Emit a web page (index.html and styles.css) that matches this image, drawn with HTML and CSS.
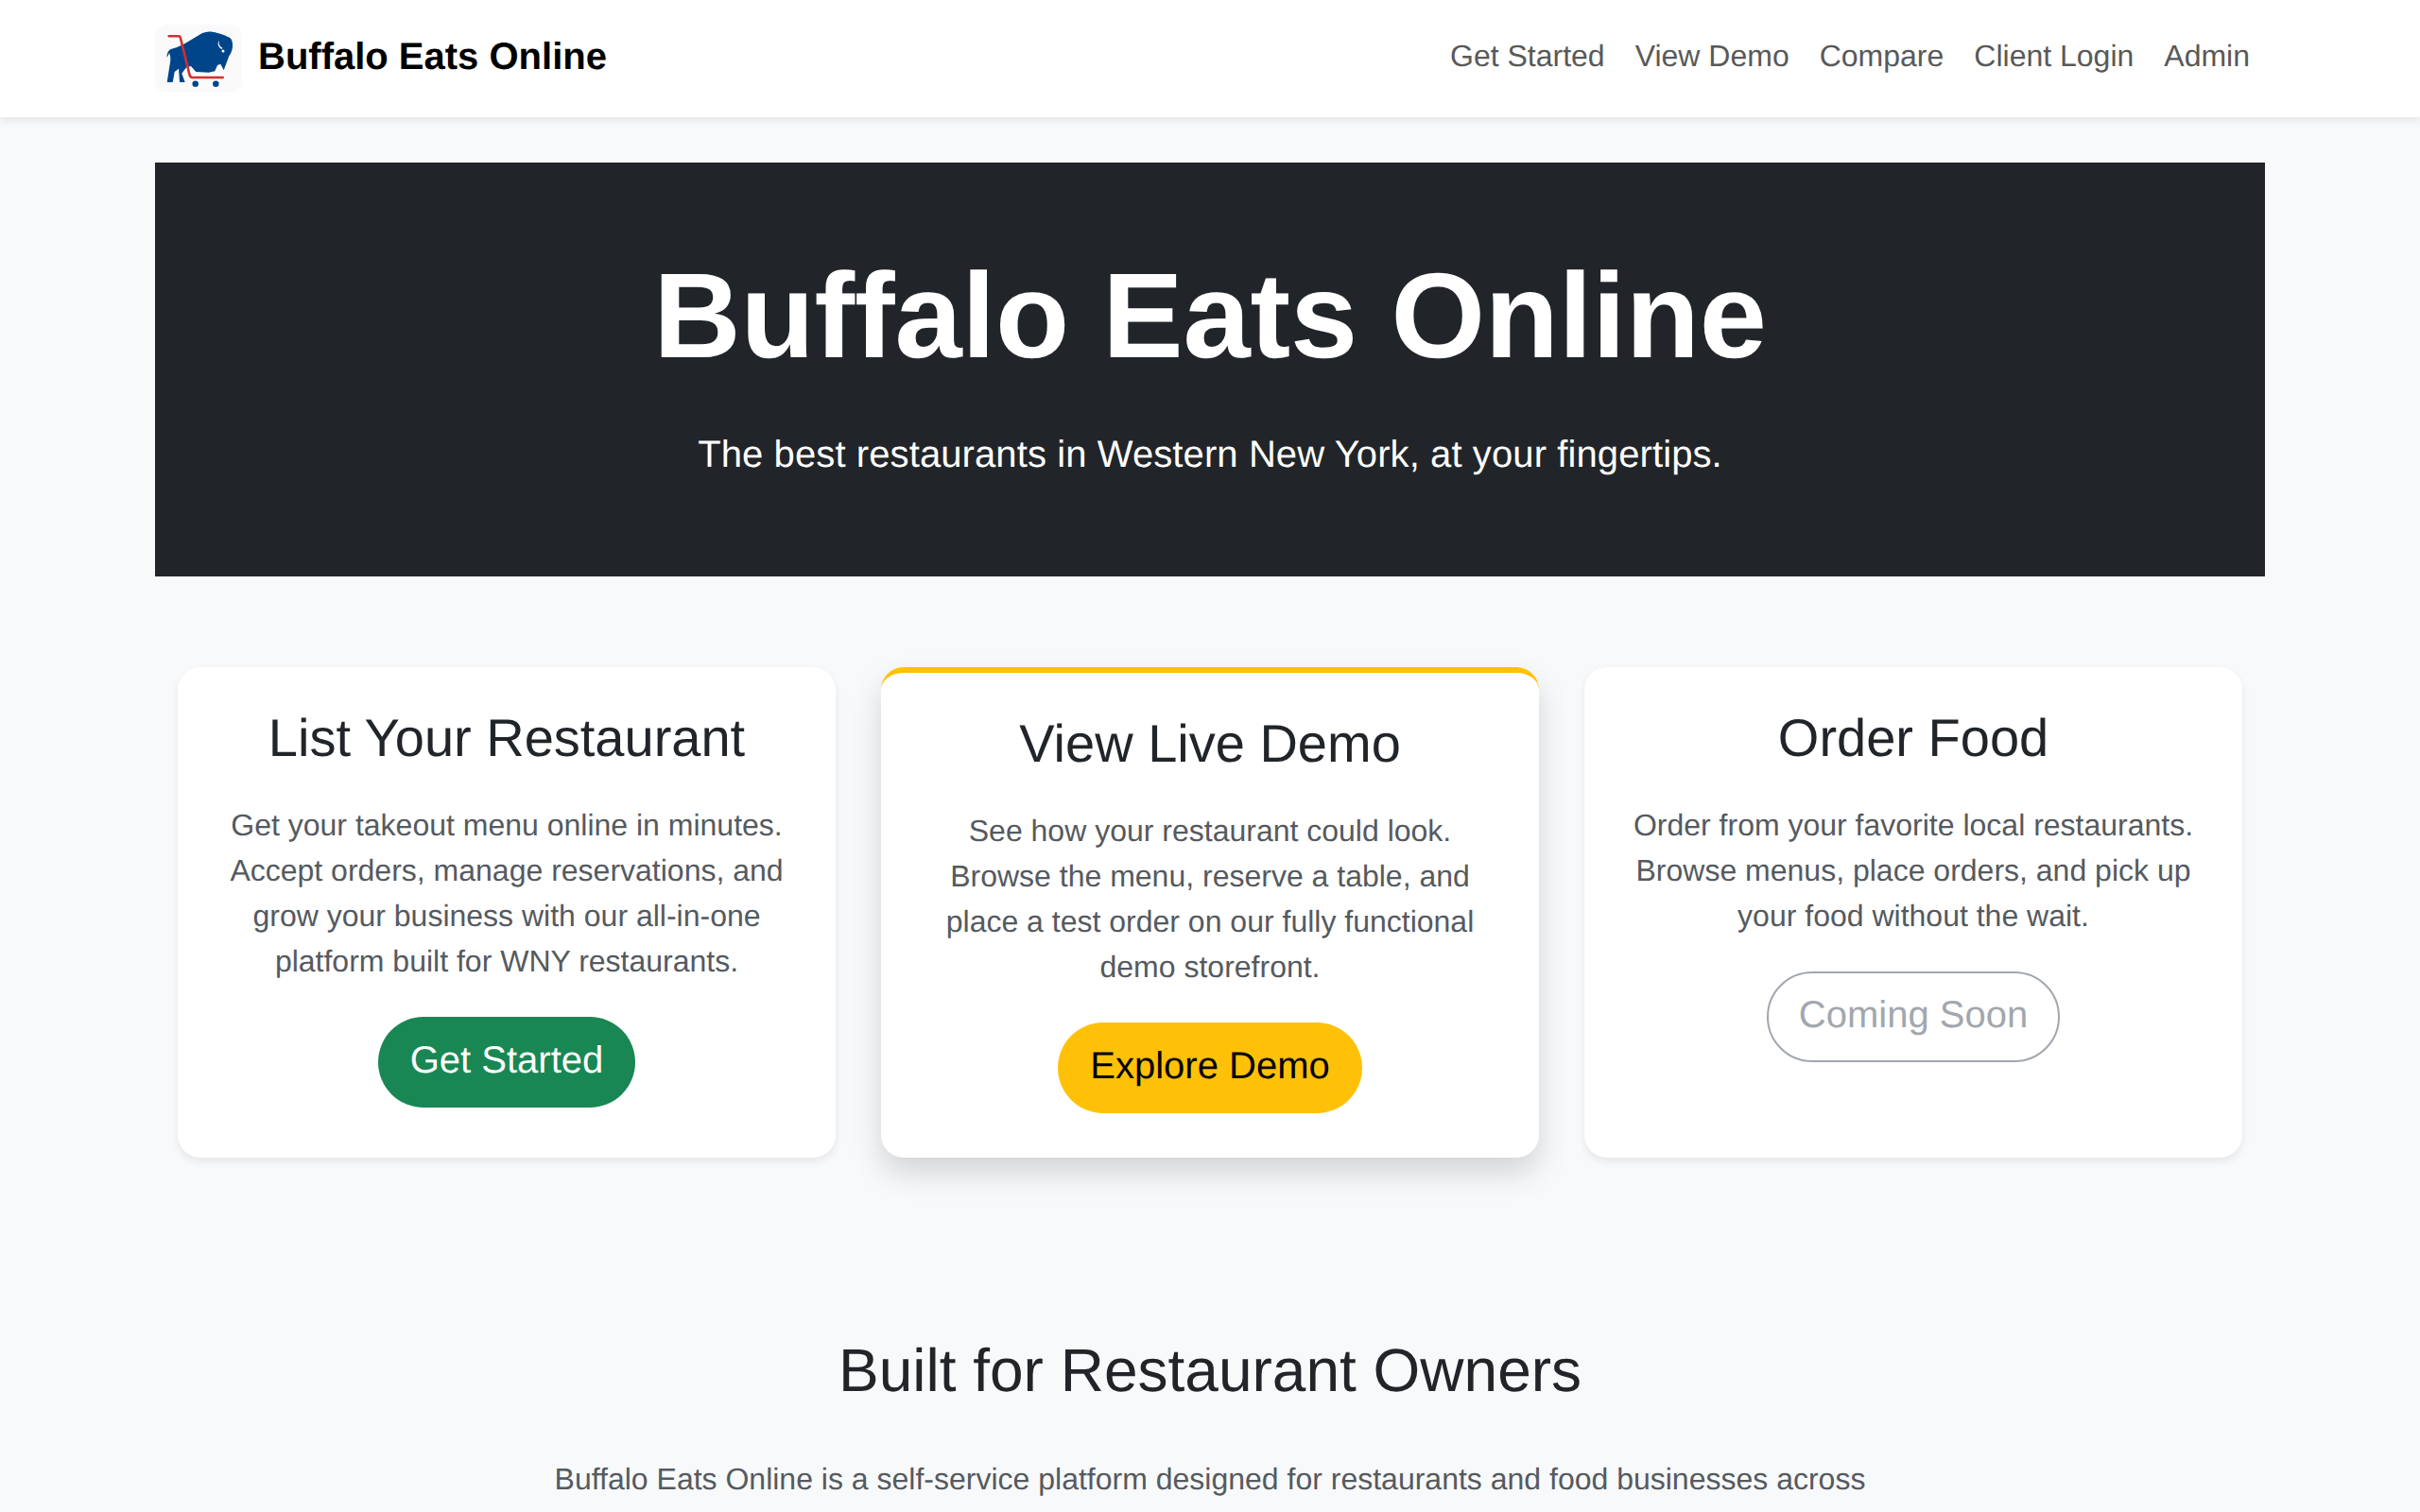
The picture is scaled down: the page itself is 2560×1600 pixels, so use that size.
FILE: index.html
```html
<!DOCTYPE html>
<html lang="en">
<head>
    <meta charset="UTF-8">
    <meta name="viewport" content="width=device-width, initial-scale=1.0">
    <title>Buffalo Eats Online</title>
    <link rel="stylesheet" href="styles.css">
</head>
<body>

<nav class="navbar">
    <div class="navbar-inner">
        <a class="brand" href="#">
            <span class="brand-logo">
                <svg width="92" height="72" viewBox="0 0 92 72">
                    <path fill="#00458a" d="M31.7 20 L23.3 24 L16.7 26 C14 27 12.8 30 12.3 35 C13.5 33.5 14.5 31.5 15 30 C16.5 33 16.7 37 16 40 L12.7 61 L18.7 61 L20.7 50 L25 46.7 L26 61 L31.7 61 L28.3 51.7 L33.3 45 L38 44 L43.3 50 L56.7 50.7 L63.3 49.3 L66 43 L69.3 41.7 L72.7 48.3 L78.3 33.3 C81 30 82.5 25 82 20 C81.5 16 80 13.8 77 13 C74 11 70 10 66 9 C60 7 55 7 50 9 Z"/>
                    <path fill="#fff" d="M67.7 16.7 C66 19 66 23 70.5 26 L71.5 24.8 C68.5 23.5 67 20.5 67.7 16.7 Z"/>
                    <circle fill="#fff" cx="72" cy="28" r="1.5"/>
                    <path fill="none" stroke="#d32f2f" stroke-width="2.6" stroke-linecap="round" stroke-linejoin="round" d="M14.7 12.3 H25 C26 12.3 26.5 12.8 26.8 13.8 L36.5 53 C37 55.2 38 56 39.5 56 H71.7"/>
                    <circle fill="#00458a" cx="42.7" cy="62.7" r="3.3"/>
                    <circle fill="#00458a" cx="64.3" cy="62.7" r="3.3"/>
                </svg>
            </span>
            <span class="brand-name">Buffalo Eats Online</span>
        </a>
        <div class="nav-links">
            <a href="#">Get Started</a>
            <a href="#">View Demo</a>
            <a href="#">Compare</a>
            <a href="#">Client Login</a>
            <a href="#">Admin</a>
        </div>
    </div>
</nav>

<main class="container">
    <header class="hero">
        <h1>Buffalo Eats Online</h1>
        <p>The best restaurants in Western New York, at your fingertips.</p>
    </header>

    <section class="cards">
        <div class="card">
            <h3>List Your Restaurant</h3>
            <p>Get your takeout menu online in minutes. Accept orders, manage reservations, and grow your business with our all-in-one platform built for WNY restaurants.</p>
            <a class="btn btn-green" href="#">Get Started</a>
        </div>
        <div class="card card-featured">
            <h3>View Live Demo</h3>
            <p>See how your restaurant could look. Browse the menu, reserve a table, and place a test order on our fully functional demo storefront.</p>
            <a class="btn btn-yellow" href="#">Explore Demo</a>
        </div>
        <div class="card">
            <h3>Order Food</h3>
            <p>Order from your favorite local restaurants. Browse menus, place orders, and pick up your food without the wait.</p>
            <a class="btn btn-disabled" href="#">Coming Soon</a>
        </div>
    </section>

    <section class="about">
        <h2>Built for Restaurant Owners</h2>
        <p>Buffalo Eats Online is a self-service platform designed for restaurants and food businesses across</p>
    </section>
</main>

</body>
</html>
```

FILE: styles.css
```css
body {
    margin: 0;
    font-family: "Liberation Sans", Arial, sans-serif;
    font-size: 32px;
    line-height: 1.5;
    color: #212529;
    background-color: #f8f9fa;
    text-rendering: geometricPrecision;
}
a {
    text-decoration: none;
}
.navbar {
    background-color: white;
    height: 124px;
    box-shadow: 0 4px 8px rgba(0, 0, 0, 0.075);
}
.navbar-inner {
    width: 2232px;
    height: 100%;
    margin: 0 auto;
    display: flex;
    align-items: center;
    justify-content: space-between;
}
.brand {
    display: flex;
    align-items: center;
    gap: 17px;
    font-size: 40px;
    font-weight: bold;
    color: black;
}
.brand-name {
    margin-bottom: 5px;
}
.brand-logo {
    display: block;
    width: 92px;
    height: 72px;
    border-radius: 12px;
    background-color: #fafafb;
}
.brand-logo svg {
    display: block;
}
.nav-links {
    display: flex;
    margin-bottom: 6px;
}
.nav-links a {
    padding: 16px;
    color: #595959;
}
.container {
    width: 2232px;
    margin: 48px auto 0;
}
.hero {
    background-color: #212529;
    color: white;
    text-align: center;
    padding: 86px 0 0;
    height: 438px;
    box-sizing: border-box;
}
.hero h1 {
    margin: 0 0 39px;
    font-size: 128px;
    line-height: 1.2;
    font-weight: bold;
    letter-spacing: -0.17px;
}
.hero p {
    margin: 0;
    font-size: 40px;
    letter-spacing: 0.1px;
}
.cards {
    display: flex;
    gap: 48px;
    margin: 96px 24px 0;
}
.card {
    flex: 1;
    box-sizing: border-box;
    padding: 41px 48px 47px;
    background-color: white;
    border-radius: 24px;
    text-align: center;
    box-shadow: 0 4px 8px rgba(0, 0, 0, 0.075);
}
.card-featured {
    border-top: 6px solid #ffc107;
    box-shadow: 0 16px 32px rgba(0, 0, 0, 0.15);
}
.card h3 {
    margin: 0 0 35px;
    font-size: 56px;
    line-height: 1.2;
    font-weight: normal;
}
.card p {
    margin: 0 0 34px;
    color: #555a60;
}
.btn {
    display: inline-block;
    padding: 14px 32px 18px;
    border: 2px solid transparent;
    border-radius: 100px;
    font-size: 40px;
    line-height: 1.5;
    margin-top: 1px;
}
.btn-green {
    background-color: #198754;
    color: white;
}
.btn-yellow {
    background-color: #ffc107;
    color: black;
}
.btn-disabled {
    border-color: #a2a7ae;
    color: #a2a7ae;
}
.about {
    margin-top: 187px;
    text-align: center;
}
.about h2 {
    margin: 0 0 52px;
    font-size: 64px;
    line-height: 1.2;
    font-weight: normal;
}
.about p {
    margin: 0;
    color: #555a60;
}
```
